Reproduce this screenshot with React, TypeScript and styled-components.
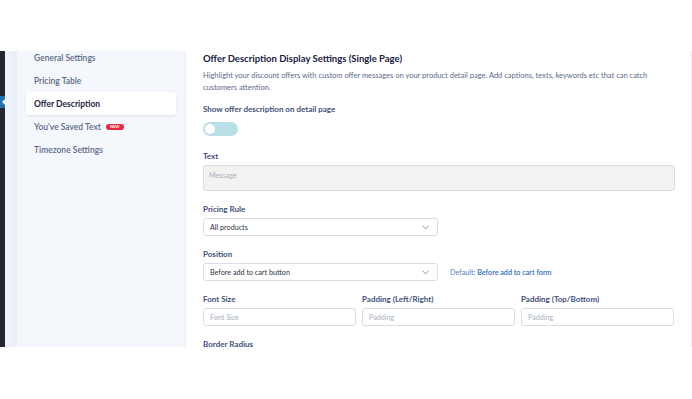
import React from 'react';
import styled, { createGlobalStyle } from 'styled-components';

const GlobalStyle = createGlobalStyle`
  html, body {
    margin: 0;
    padding: 0;
    background: #ffffff;
  }
  body {
    font-family: Lato, 'Open Sans', sans-serif;
    width: 692px;
    height: 399px;
    overflow: hidden;
  }
`;

const menu = [
  { id: 'general', label: 'General Settings' },
  { id: 'pricing', label: 'Pricing Table' },
  { id: 'offer', label: 'Offer Description' },
  { id: 'saved', label: "You've Saved Text", badge: 'NEW' },
  { id: 'timezone', label: 'Timezone Settings' },
];

const ChevronDown = () => (
  <svg width="7" height="5" viewBox="0 0 8 5" fill="none">
    <path d="M1 1l3 3 3-3" stroke="#7a8290" strokeWidth="1" strokeLinecap="round" strokeLinejoin="round" />
  </svg>
);

const App = () => {
  const active = 'offer';
  return (
    <>
      <GlobalStyle />
      <Frame>
        <AdminBar>
          <CurrentMark />
        </AdminBar>
        <Gutter />
        <Sidebar>
          <ul>
            {menu.map((m) => (
              <MenuItem key={m.id} active={m.id === active}>
                {m.label}
                {m.badge && <Badge>{m.badge}</Badge>}
              </MenuItem>
            ))}
          </ul>
        </Sidebar>
        <Main>
          <Heading>Offer Description Display Settings (Single Page)</Heading>
          <Description>
            Highlight your discount offers with custom offer messages on your product detail page. Add captions, texts,
            keywords etc that can catch customers attention.
          </Description>
          <Field gap={9}>
            <Label>Show offer description on detail page</Label>
            <Toggle>
              <span />
            </Toggle>
          </Field>
          <Field gap={14}>
            <Label>Text</Label>
            <TextArea>Message</TextArea>
          </Field>
          <Field>
            <Label>Pricing Rule</Label>
            <Select>
              All products
              <ChevronDown />
            </Select>
          </Field>
          <Field>
            <Label>Position</Label>
            <InlineRow>
              <Select>
                Before add to cart button
                <ChevronDown />
              </Select>
              <Hint>
                Default: <b>Before add to cart form</b>
              </Hint>
            </InlineRow>
          </Field>
          <Columns>
            <Field>
              <Label>Font Size</Label>
              <Input>Font Size</Input>
            </Field>
            <Field>
              <Label>Padding (Left/Right)</Label>
              <Input>Padding</Input>
            </Field>
            <Field>
              <Label>Padding (Top/Bottom)</Label>
              <Input>Padding</Input>
            </Field>
          </Columns>
          <Field>
            <Label>Border Radius</Label>
          </Field>
        </Main>
      </Frame>
    </>
  );
};

const Frame = styled.div`
  margin-top: 51px;
  height: 296px;
  display: flex;
  overflow: hidden;
`;

const AdminBar = styled.div`
  width: 5px;
  background: #24282d;
  position: relative;
`;

const CurrentMark = styled.div`
  position: absolute;
  left: 0;
  top: 45px;
  width: 5px;
  height: 12px;
  background: #2271b1;
  &:after {
    content: '';
    position: absolute;
    right: 0;
    top: 3px;
    border: 3px solid transparent;
    border-right-color: #eef2f8;
    border-left: 0;
  }
`;

const Gutter = styled.div`
  width: 12px;
  background: linear-gradient(90deg, #f1f4fa, #e8edf6);
`;

const Sidebar = styled.nav`
  width: 169px;
  background: #f4f8fd;
  border-right: 1px solid #e7edf4;
  box-sizing: border-box;
  padding: 0 9px;
  ul {
    list-style: none;
    margin: -5px 0 0;
    padding: 0;
  }
`;

const MenuItem = styled.li<{ active: boolean }>`
  height: 23px;
  display: flex;
  align-items: center;
  padding-left: 8px;
  font-size: 8.5px;
  font-weight: ${(p) => (p.active ? 700 : 600)};
  color: ${(p) => (p.active ? '#1d2745' : '#5b6886')};
  background: ${(p) => (p.active ? '#ffffff' : 'transparent')};
  border-radius: 4px;
  box-shadow: ${(p) => (p.active ? '0 1px 3px rgba(40, 60, 100, 0.12)' : 'none')};
`;

const Badge = styled.span`
  margin-left: 5px;
  background: #e8273c;
  color: #fff;
  font-size: 4px;
  font-weight: 700;
  padding: 1px 4px;
  border-radius: 6px;
  line-height: 4px;
`;

const Main = styled.main`
  flex: 1;
  background: #ffffff;
  border-right: 1px solid #e9edf2;
  padding: 1px 16px 0 17px;
`;

const Heading = styled.h2`
  margin: 0;
  font-size: 9.5px;
  line-height: 14px;
  font-weight: 700;
  color: #17213f;
`;

const Description = styled.p`
  margin: 4px 0 0;
  font-size: 7.5px;
  line-height: 12px;
  color: #5c6b89;
  max-width: 460px;
`;

const Field = styled.div<{ gap?: number }>`
  margin-top: ${(p) => p.gap ?? 12}px;
  display: flex;
  flex-direction: column;
`;

const Label = styled.label`
  font-size: 8px;
  line-height: 12px;
  font-weight: 700;
  color: #41507a;
  margin-bottom: 3px;
`;

const Toggle = styled.div`
  margin-top: 4px;
  width: 35px;
  height: 14px;
  border-radius: 7px;
  background: #b9e0e7;
  position: relative;
  span {
    position: absolute;
    left: 2px;
    top: 2px;
    width: 10px;
    height: 10px;
    border-radius: 50%;
    background: #fff;
  }
`;

const boxBase = `
  box-sizing: border-box;
  border: 1px solid #d9dee6;
  border-radius: 3px;
  font-size: 7.2px;
  display: flex;
  align-items: center;
`;

const TextArea = styled.div`
  ${boxBase}
  height: 26px;
  width: 472px;
  background: #f2f2f2;
  align-items: flex-start;
  padding: 5px 5px;
  color: #a8b1c0;
`;

const Select = styled.div`
  ${boxBase}
  height: 18px;
  width: 235px;
  padding: 0 8px 0 6px;
  justify-content: space-between;
  color: #2d3543;
  background: #fff;
`;

const InlineRow = styled.div`
  display: flex;
  align-items: center;
  gap: 12px;
`;

const Hint = styled.span`
  font-size: 7.2px;
  color: #4f7fc2;
  b {
    font-weight: 600;
    color: #2f6cc0;
  }
`;

const Columns = styled.div`
  display: grid;
  grid-template-columns: repeat(3, 153px);
  column-gap: 6px;
`;

const Input = styled.div`
  ${boxBase}
  height: 18px;
  padding: 0 6px;
  color: #a8b1c0;
  background: #fff;
`;

export default App;
